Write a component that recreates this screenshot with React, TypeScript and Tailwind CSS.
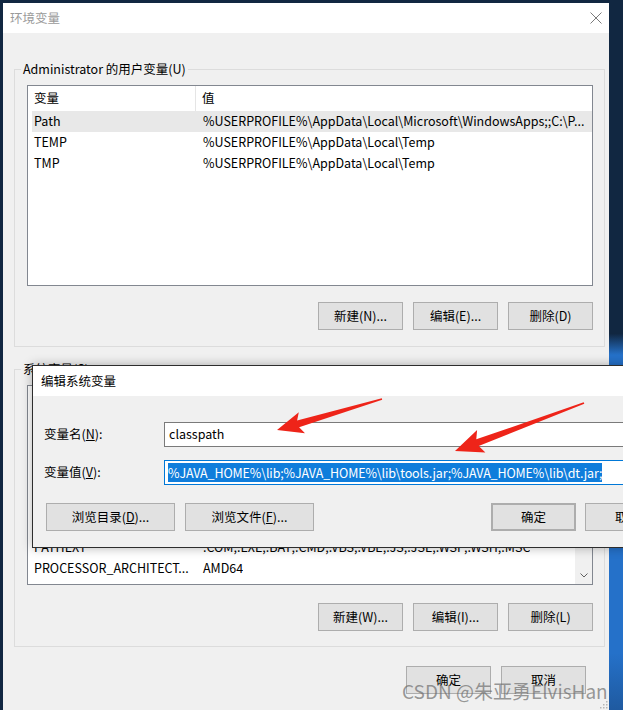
import type { ReactNode } from "react";

const userVars = [
  ["Path", "%USERPROFILE%\\AppData\\Local\\Microsoft\\WindowsApps;;C:\\P..."],
  ["TEMP", "%USERPROFILE%\\AppData\\Local\\Temp"],
  ["TMP", "%USERPROFILE%\\AppData\\Local\\Temp"],
];

const systemVars = [
  ["ComSpec", "C:\\Windows\\system32\\cmd.exe"],
  ["DriverData", "C:\\Windows\\System32\\Drivers\\DriverData"],
  ["JAVA_HOME", "C:\\Program Files\\Java\\jdk1.8.0_201"],
  ["NUMBER_OF_PROCESSORS", "4"],
  ["OS", "Windows_NT"],
  ["Path", "C:\\Windows\\system32;C:\\Windows;C:\\Windows\\System32\\Wbem;..."],
  ["PATHEXT", ".COM;.EXE;.BAT;.CMD;.VBS;.VBE;.JS;.JSE;.WSF;.WSH;.MSC"],
  ["PROCESSOR_ARCHITECT...", "AMD64"],
];

function Btn({ children, className = "" }: { children: ReactNode; className?: string }) {
  return (
    <div className={`h-[28px] shrink-0 flex items-center justify-center bg-[#e1e1e1] border border-[#adadad] text-black ${className}`}>
      {children}
    </div>
  );
}

function Row({ name, value, selected = false }: { name: string; value: string; selected?: boolean }) {
  return (
    <div className={`ml-[4px] h-[21px] shrink-0 flex items-center whitespace-nowrap overflow-hidden ${selected ? "bg-[#e8e8e8]" : ""}`}>
      <div className="w-[169px] pl-[2px] shrink-0 overflow-hidden">{name}</div>
      <div className="pl-[2px] overflow-hidden">{value}</div>
    </div>
  );
}

function ListHeader() {
  return (
    <div className="h-[25px] shrink-0 flex items-center">
      <div className="w-[168px] h-full flex items-center pl-[6px] border-r border-[#e5e5e5]">变量</div>
      <div className="pl-[6px]">值</div>
    </div>
  );
}

function Arrow({ points }: { points: string }) {
  return <polygon points={points} fill="#ee2419" />;
}

export default function App() {
  return (
    <div className="relative w-[623px] h-[710px] overflow-hidden bg-[#112741] pt-[3px] pl-[3px] flex font-['Noto_Sans_CJK_SC',sans-serif] text-[12.5px] text-black">
      {/* main window */}
      <div className="w-[606px] h-[707px] flex flex-col shrink-0">
        <div className="h-[30px] bg-white flex items-center justify-between pl-[7px] pr-[6px]">
          <span className="text-[#9a9a9a]">环境变量</span>
          <svg width="12" height="12" viewBox="0 0 12 12" className="mr-[1px]">
            <path d="M0.5 0.5L11.5 11.5M11.5 0.5L0.5 11.5" stroke="#7a7a7a" strokeWidth="1" />
          </svg>
        </div>

        <div className="flex-1 bg-[#f0f0f0] flex flex-col">
          {/* user variables */}
          <fieldset className="ml-[11px] mt-[26px] w-[591px] border border-[#dcdcdc] pb-[16px]">
            <legend className="ml-[6px] px-[2px] leading-[20px]">Administrator 的用户变量(U)</legend>
            <div className="ml-[12px] mt-[6px] w-[566px] h-[201px] bg-white border border-[#828790] flex flex-col">
              <ListHeader />
              {userVars.map(([n, v], i) => (
                <Row key={n} name={n} value={v} selected={i === 0} />
              ))}
            </div>
            <div className="ml-[12px] w-[566px] mt-[16px] flex justify-end gap-[10px]">
              <Btn className="w-[85px]">新建(N)...</Btn>
              <Btn className="w-[85px]">编辑(E)...</Btn>
              <Btn className="w-[85px]">删除(D)</Btn>
            </div>
          </fieldset>

          {/* system variables */}
          <fieldset className="ml-[11px] mt-[12px] w-[591px] border border-[#dcdcdc] pb-[15px]">
            <legend className="ml-[6px] px-[2px] leading-[20px]">系统变量(S)</legend>
            <div className="ml-[12px] mt-[6px] w-[566px] h-[200px] bg-white border border-[#828790] flex">
              <div className="flex-1 flex flex-col overflow-hidden">
                <ListHeader />
                <div className="flex-1 flex flex-col justify-end overflow-hidden pb-[5px]">
                  {systemVars.map(([n, v]) => (
                    <Row key={n} name={n} value={v} />
                  ))}
                </div>
              </div>
              <div className="w-[17px] bg-[#f0f0f0] flex flex-col justify-end">
                <div className="h-[17px] flex items-center justify-center">
                  <svg width="8" height="5" viewBox="0 0 8 5">
                    <path d="M0.5 0.5L4 4L7.5 0.5" stroke="#606060" strokeWidth="1" fill="none" />
                  </svg>
                </div>
              </div>
            </div>
            <div className="ml-[12px] w-[566px] mt-[18px] flex justify-end gap-[10px]">
              <Btn className="w-[85px]">新建(W)...</Btn>
              <Btn className="w-[85px]">编辑(I)...</Btn>
              <Btn className="w-[85px]">删除(L)</Btn>
            </div>
          </fieldset>

          <div className="mt-[19px] flex justify-end gap-[10px] pr-[23px]">
            <Btn className="w-[85px]">确定</Btn>
            <Btn className="w-[85px]">取消</Btn>
          </div>

          <div className="flex-1 flex items-end justify-end pr-[1px] pb-[1px]">
            <svg width="9" height="9" viewBox="0 0 9 9">
              <rect x="7" y="1" width="1.5" height="1.5" fill="#b5b5b5" />
              <rect x="4" y="4" width="1.5" height="1.5" fill="#b5b5b5" />
              <rect x="7" y="4" width="1.5" height="1.5" fill="#b5b5b5" />
              <rect x="1" y="7" width="1.5" height="1.5" fill="#b5b5b5" />
              <rect x="4" y="7" width="1.5" height="1.5" fill="#b5b5b5" />
              <rect x="7" y="7" width="1.5" height="1.5" fill="#b5b5b5" />
            </svg>
          </div>
        </div>
      </div>

      {/* desktop strip on the right */}
      <div className="flex-1 -mt-[3px] bg-[linear-gradient(180deg,#112741_0%,#112741_47%,#2571c9_50%,#2571c9_92%,#1f5aa0_100%)]" />

      {/* edit dialog */}
      <div className="absolute left-[32px] top-[365px] w-[620px] border border-[#2d2d2d] bg-[#f0f0f0] shadow-[0_0_10px_rgba(0,0,0,0.3)] flex flex-col">
        <div className="h-[30px] bg-white flex items-center pl-[8px]">编辑系统变量</div>
        <div className="mt-[26px] flex items-center">
          <div className="w-[131px] shrink-0 pl-[11px]">
            变量名(<span className="underline">N</span>):
          </div>
          <div className="w-[470px] shrink-0 h-[25px] bg-white border border-[#7a7a7a] flex items-center pl-[4px]">classpath</div>
        </div>
        <div className="mt-[13px] flex items-center">
          <div className="w-[131px] shrink-0 pl-[11px]">
            变量值(<span className="underline">V</span>):
          </div>
          <div className="w-[470px] shrink-0 h-[25px] bg-white border border-[#0078d7] flex items-center pl-[3px] whitespace-nowrap">
            <span className="bg-[#0f7ddb] text-white leading-[19px] tracking-[-0.13px]">%JAVA_HOME%\lib;%JAVA_HOME%\lib\tools.jar;%JAVA_HOME%\lib\dt.jar;</span>
          </div>
        </div>
        <div className="mt-[18px] mb-[16px] flex items-center pl-[13px]">
          <Btn className="w-[129px]">
            浏览目录(<span className="underline">D</span>)...
          </Btn>
          <Btn className="w-[129px] ml-[10px]">
            浏览文件(<span className="underline">F</span>)...
          </Btn>
          <Btn className="w-[85px] ml-[177px] border-2 border-[#0078d7]">确定</Btn>
          <Btn className="w-[85px] ml-[9px]">取消</Btn>
        </div>
      </div>

      {/* red annotation arrows */}
      <svg className="absolute left-0 top-0 pointer-events-none" width="623" height="710" viewBox="0 0 623 710">
        <Arrow points="277,430 298.8,412.2 297.1,420.4 381.8,398.2 382.2,399.8 299.1,427.2 305,433.2" />
        <Arrow points="455,451 477.1,430 476.3,439.3 583.7,402.3 584.3,403.8 478.7,445.9 485.4,452.5" />
      </svg>

      {/* watermark */}
      <div className="absolute left-[402px] top-[679px] text-[19px] leading-[24px] text-[#6e6e6e]/70 whitespace-nowrap pointer-events-none">
        CSDN @朱亚勇ElvisHan
      </div>
    </div>
  );
}
